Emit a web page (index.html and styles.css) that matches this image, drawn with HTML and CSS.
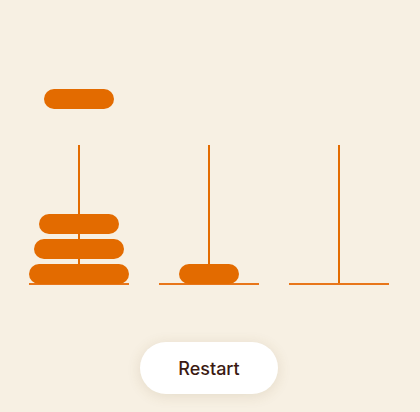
FILE: index.html
```html
<!DOCTYPE html>
<html lang="en">
<head>
<meta charset="utf-8">
<title>Tower of Hanoi</title>
<link rel="stylesheet" href="styles.css">
</head>
<body>
<main class="game">
  <div class="held-row">
    <div class="slot"><div class="disk disk-70"></div></div>
    <div class="slot"></div>
    <div class="slot"></div>
  </div>
  <div class="towers">
    <div class="tower">
      <div class="post">
        <div class="pole"></div>
        <div class="stack">
          <div class="disk disk-80"></div>
          <div class="disk disk-90"></div>
          <div class="disk disk-100"></div>
        </div>
      </div>
      <div class="base"></div>
    </div>
    <div class="tower">
      <div class="post">
        <div class="pole"></div>
        <div class="stack">
          <div class="disk disk-60"></div>
        </div>
      </div>
      <div class="base"></div>
    </div>
    <div class="tower">
      <div class="post">
        <div class="pole"></div>
        <div class="stack"></div>
      </div>
      <div class="base"></div>
    </div>
  </div>
  <button class="restart" type="button">Restart</button>
</main>
</body>
</html>
```
FILE: styles.css
```css
html, body {
  margin: 0;
  padding: 0;
  background: #f7f0e3;
}
body {
  width: 420px;
  height: 412px;
  overflow: hidden;
  font-family: Inter, "DejaVu Sans", sans-serif;
}
.game {
  display: flex;
  flex-direction: column;
  align-items: center;
  padding-top: 89px;
  padding-right: 2px;
}
.held-row {
  display: flex;
  gap: 30px;
  height: 20px;
}
.slot {
  width: 100px;
  display: flex;
  justify-content: center;
}
.disk {
  height: 20px;
  border-radius: 10px;
  background: #e36b00;
}
.disk-60 { width: 60px; }
.disk-70 { width: 70px; }
.disk-80 { width: 80px; }
.disk-90 { width: 90px; }
.disk-100 { width: 100px; }
.towers {
  display: flex;
  gap: 30px;
  margin-top: 36px;
}
.tower {
  width: 100px;
  display: flex;
  flex-direction: column;
}
.post {
  display: grid;
  height: 138px;
}
.pole {
  grid-area: 1 / 1;
  justify-self: center;
  width: 2px;
  height: 138px;
  background: #e36b00;
}
.stack {
  grid-area: 1 / 1;
  display: flex;
  flex-direction: column;
  align-items: center;
  justify-content: flex-end;
  gap: 5px;
  margin-bottom: -1px;
  position: relative;
}
.base {
  height: 2px;
  background: #e8761a;
}
.restart {
  margin-top: 57px;
  width: 138px;
  height: 52px;
  border: none;
  border-radius: 26px;
  background: #ffffff;
  box-shadow: 0 2px 14px rgba(120, 90, 40, 0.14);
  color: #3b1a12;
  font-family: Inter, "DejaVu Sans", sans-serif;
  font-size: 18px;
  font-weight: 500;
  padding: 0;
  cursor: pointer;
}
```
